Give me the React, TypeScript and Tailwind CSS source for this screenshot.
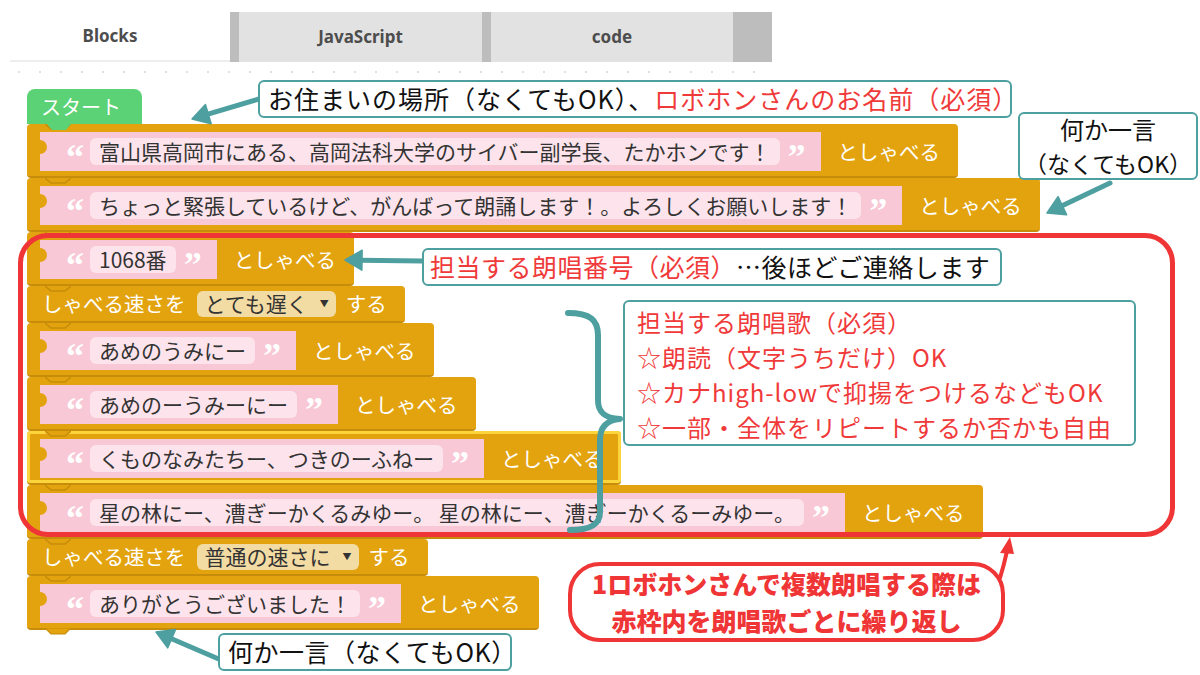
import React from 'react';

const TEAL = '#4e9fa0';

function head(x1: number, y1: number, x2: number, y2: number, len = 17, w = 10) {
  const dx = x2 - x1;
  const dy = y2 - y1;
  const L = Math.hypot(dx, dy);
  const ux = dx / L;
  const uy = dy / L;
  const bx = x2 - ux * len;
  const by = y2 - uy * len;
  const nx = -uy;
  const ny = ux;
  return {
    x2: bx + ux * 2,
    y2: by + uy * 2,
    pts: `${x2},${y2} ${bx + nx * w},${by + ny * w} ${bx - nx * w},${by - ny * w}`,
  };
}

function Arrow({ x1, y1, x2, y2, color }: { x1: number; y1: number; x2: number; y2: number; color: string }) {
  const h = head(x1, y1, x2, y2);
  return (
    <g>
      <line x1={x1} y1={y1} x2={h.x2} y2={h.y2} stroke={color} strokeWidth={5} strokeLinecap="round" />
      <polygon points={h.pts} fill={color} stroke={color} strokeWidth={1.5} strokeLinejoin="round" />
    </g>
  );
}

function Quote({ ch }: { ch: string }) {
  return (
    <span className="w-[16px] self-stretch pt-[7px] text-center font-['Liberation_Serif',serif] text-[36px] font-bold leading-none text-white">
      {ch}
    </span>
  );
}

function Notch() {
  return (
    <svg className="absolute left-[18px] top-[-1px]" width="26" height="8" viewBox="0 0 26 8">
      <path d="M0 1 L6 6 L20 6 L26 1" fill="#e2a30f" stroke="#c68c0a" strokeWidth="1.5" />
    </svg>
  );
}

function Reporter({ text }: { text: string }) {
  return (
    <div className="relative flex h-[39px] items-center bg-[#f8c8d6] pl-[26px] pr-[17px]">
      <span className="absolute left-0 top-[8px] h-[14px] w-[7px] rounded-r-[7px] bg-[#e2a30f]" />
      <Quote ch="“" />
      <span className="ml-[8px] flex h-[27px] items-center whitespace-pre rounded-[6px] bg-[#fde4ec] px-[9px] text-[21px] leading-none text-[#333]">
        {text}
      </span>
      <span className="ml-[8px] flex self-stretch">
        <Quote ch="”" />
      </span>
    </div>
  );
}

function SayBlock({ text, selected, last }: { text: string; selected?: boolean; last?: boolean }) {
  return (
    <div
      className={
        selected
          ? 'relative flex h-[54px] items-start rounded-[4px] border-b-2 border-[#c68c0a] bg-[#e2a30f] pl-[13px] pr-[18px] pt-[8px] shadow-[inset_0_0_0_3px_#fcd43c]'
          : 'relative flex h-[54px] items-start rounded-[4px] border-b-2 border-[#c68c0a] bg-[#e2a30f] pl-[13px] pr-[18px] pt-[8px]'
      }
    >
      <Notch />
      <Reporter text={text} />
      <span className="ml-[17px] flex h-[39px] items-center text-[20.5px] text-white">としゃべる</span>
      {last && (
        <svg className="absolute bottom-[-8px] left-[18px]" width="26" height="8" viewBox="0 0 26 8">
          <path d="M0 0 L6 6 L20 6 L26 0 Z" fill="#e2a30f" stroke="#c68c0a" strokeWidth="1.2" />
        </svg>
      )}
    </div>
  );
}

function SpeedBlock({ value }: { value: string }) {
  return (
    <div className="relative flex h-[37px] items-center rounded-[4px] border-b-2 border-[#c68c0a] bg-[#e2a30f] pl-[15px] pr-[18px] text-[20.5px] text-white">
      <Notch />
      <span>しゃべる速さを</span>
      <span className="ml-[11px] flex h-[26px] items-center rounded-[6px] bg-[#f3dca4] pl-[8px] pr-[7px] text-[21px] leading-none text-[#333]">
        {value}
        <span className="ml-[12px] text-[9px]">▼</span>
      </span>
      <span className="ml-[10px]">する</span>
    </div>
  );
}

export default function App() {
  const dots = Array.from({ length: 36 });
  return (
    <div className="relative h-[675px] w-[1200px] overflow-hidden bg-white font-['Noto_Sans_CJK_JP','Noto_Sans',sans-serif]">
      {/* tabs */}
      <div className="ml-[10px] mt-[12px] flex h-[50px] w-[762px]">
        <div className="flex w-[220px] items-center justify-center border-b-2 border-[#eeeeee] pr-[20px] font-['Noto_Sans',sans-serif] text-[17px] font-bold text-[#4d4d4d]">
          Blocks
        </div>
        <div className="w-[9px] bg-[#bdbdbd]" />
        <div className="flex w-[243px] items-center justify-center bg-[#e2e2e2] font-['Noto_Sans',sans-serif] text-[17px] font-bold text-[#4d4d4d]">
          JavaScript
        </div>
        <div className="w-[9px] bg-[#bdbdbd]" />
        <div className="flex w-[242px] items-center justify-center bg-[#e2e2e2] font-['Noto_Sans',sans-serif] text-[17px] font-bold text-[#4d4d4d]">
          code
        </div>
        <div className="w-[39px] bg-[#bdbdbd]" />
      </div>
      {/* dots */}
      <div className="ml-[18px] mt-[9px] flex gap-[19px]">
        {dots.map((_, i) => (
          <span key={i} className="h-[2px] w-[2px] rounded-full bg-[#d4d4d4]" />
        ))}
      </div>

      {/* block stack */}
      <div className="ml-[27px] mt-[16px] flex flex-col items-start">
        <div className="relative z-10 flex h-[35px] w-[115px] items-center rounded-t-[8px] bg-[#5bd275] pl-[14px] text-[20px] text-white">
          スタート
          <svg className="absolute left-[20px] top-[35px]" width="24" height="7" viewBox="0 0 24 7">
            <path d="M0 0 L5 6 L19 6 L24 0 Z" fill="#5bd275" />
          </svg>
        </div>
        <SayBlock text="富山県高岡市にある、高岡法科大学のサイバー副学長、たかホンです！" />
        <SayBlock text="ちょっと緊張しているけど、がんばって朗誦します！。よろしくお願いします！" />
        <SayBlock text="1068番" />
        <SpeedBlock value="とても遅く" />
        <SayBlock text="あめのうみにー" />
        <SayBlock text="あめのーうみーにー" />
        <SayBlock text="くものなみたちー、つきのーふねー" selected />
        <SayBlock text="星の林にー、漕ぎーかくるみゆー。 星の林にー、漕ぎーかくるーみゆー。" />
        <SpeedBlock value="普通の速さに" />
        <SayBlock text="ありがとうございました！" last />
      </div>

      {/* red frame */}
      <div className="absolute left-[18px] top-[233px] h-[304px] w-[1157px] rounded-[30px] border-[5px] border-[#ef3535]" />

      {/* overlay drawings */}
      <svg className="pointer-events-none absolute left-0 top-0" width="1200" height="675" viewBox="0 0 1200 675">
        <Arrow x1={259} y1={99} x2={192} y2={119} color={TEAL} />
        <Arrow x1={1110} y1={183} x2={1047} y2={213} color={TEAL} />
        <Arrow x1={423} y1={261} x2={345} y2={260} color={TEAL} />
        <Arrow x1={221} y1={660} x2={156} y2={632} color={TEAL} />
        <path
          d="M568 313 C590 313 598 320 598 335 L598 400 C598 412 604 418 620 419 C606 420 600 428 600 440 L600 512 C600 525 590 530 570 530"
          fill="none"
          stroke={TEAL}
          strokeWidth={6}
          strokeLinecap="round"
          strokeLinejoin="round"
        />
        <path d="M1000 578 Q1004 565 1007 551" fill="none" stroke="#ef3535" strokeWidth={4} strokeLinecap="round" />
        <polygon points="1010,537 1000,553 1014,554" fill="#ef3535" />
      </svg>

      {/* annotations */}
      <div className="absolute left-[258px] top-[80px] flex h-[38px] w-[754px] items-center whitespace-nowrap rounded-[6px] border-2 border-[#4e9fa0] bg-white pl-[8px] text-[25px] tracking-[1px] text-[#111]">
        お住まいの場所（なくてもOK）、<span className="text-[#f03a3a]">ロボホンさんのお名前（必須）</span>
      </div>
      <div className="absolute left-[1018px] top-[112px] flex h-[68px] w-[180px] flex-col items-center justify-center whitespace-nowrap rounded-[6px] border-2 border-[#4e9fa0] bg-white leading-[35px] text-[#111]">
        <span className="text-[24px]">何か一言</span>
        <span className="text-[23px]">（なくてもOK）</span>
      </div>
      <div className="absolute left-[422px] top-[248px] flex h-[38px] w-[580px] items-center whitespace-nowrap rounded-[6px] border-2 border-[#4e9fa0] bg-white pl-[6px] text-[25px] tracking-[0.5px] text-[#111]">
        <span className="text-[#f03a3a]">担当する朗唱番号（必須）</span>…後ほどご連絡します
      </div>
      <div className="absolute left-[623px] top-[300px] flex h-[146px] w-[513px] flex-col whitespace-nowrap rounded-[6px] border-2 border-[#4e9fa0] bg-white pl-[12px] pt-[2px] text-[24px] leading-[35px] tracking-[1px] text-[#f03a3a]">
        <span>担当する朗唱歌（必須）</span>
        <span>☆朗読（文字うちだけ）OK</span>
        <span>☆カナhigh-lowで抑揚をつけるなどもOK</span>
        <span>☆一部・全体をリピートするか否かも自由</span>
      </div>
      <div className="absolute left-[218px] top-[633px] flex h-[38px] w-[294px] items-center whitespace-nowrap rounded-[6px] border-2 border-[#4e9fa0] bg-white pl-[8px] text-[25px] tracking-[0.5px] text-[#111]">
        何か一言（なくてもOK）
      </div>
      <div className="absolute left-[568px] top-[562px] flex h-[80px] w-[437px] flex-col items-center justify-center whitespace-nowrap rounded-[32px] border-4 border-[#ef3535] bg-white text-[25px] font-black leading-[37px] text-[#ef3535]">
        <span>1ロボホンさんで複数朗唱する際は</span>
        <span>赤枠内を朗唱歌ごとに繰り返し</span>
      </div>
    </div>
  );
}
